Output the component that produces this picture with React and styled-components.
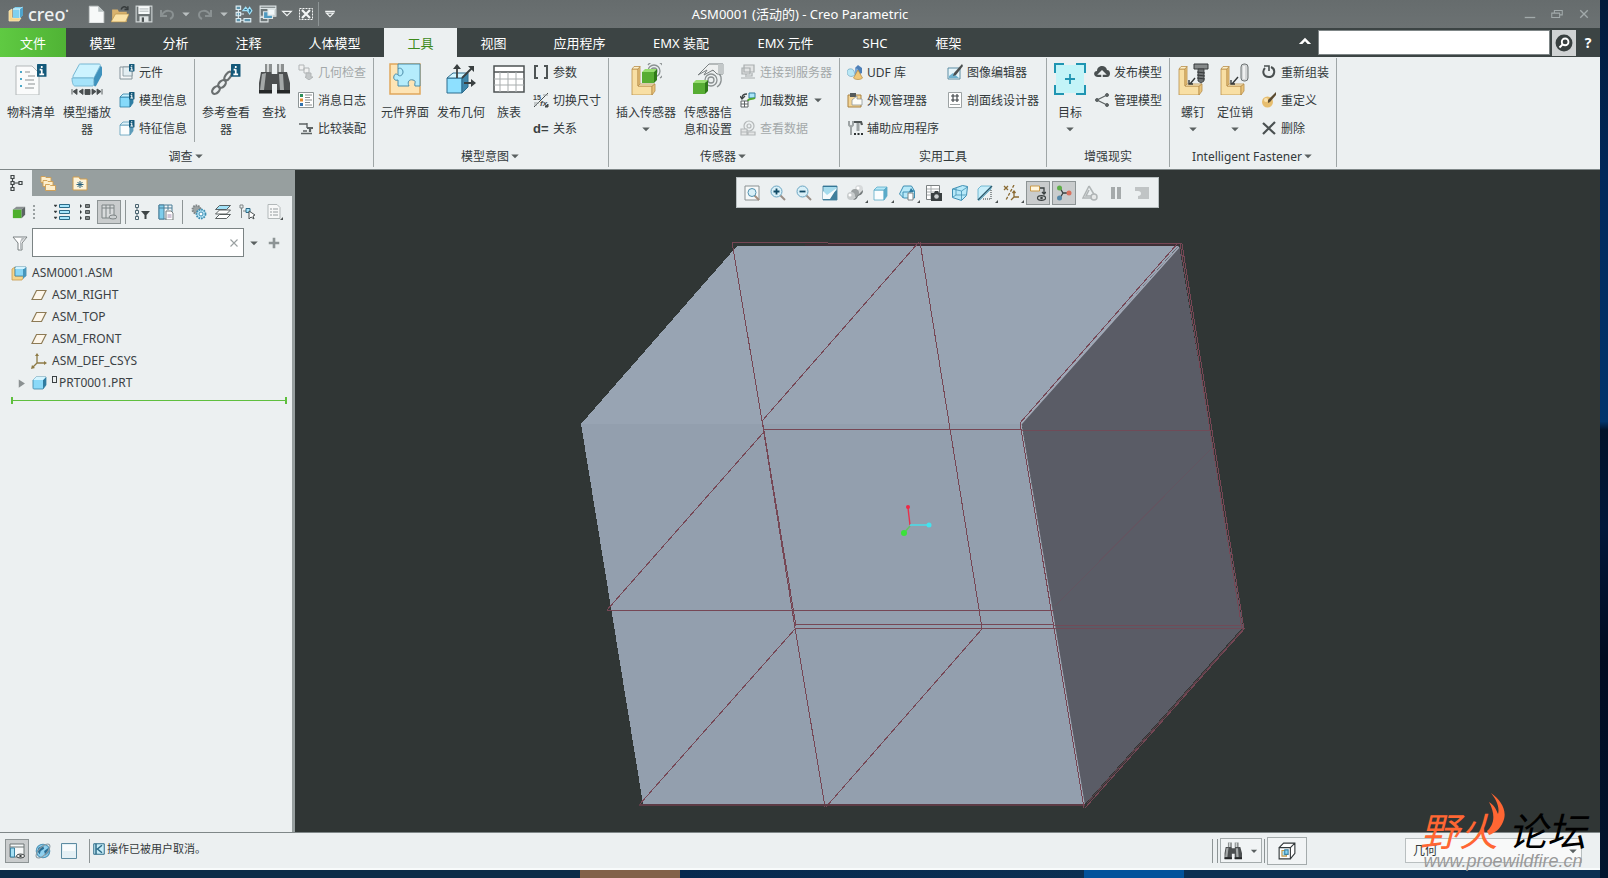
import React from "react";
import styled, { createGlobalStyle } from "styled-components";

const GlobalStyle = createGlobalStyle`
  * { box-sizing: border-box; }
  html, body, #root { height: 100%; }
  body {
    margin: 0;
    overflow: hidden;
    font-family: "Noto Sans", "Noto Sans CJK SC", sans-serif;
    font-size: 12px;
    color: #33393b;
    background: #01142e;
  }
  button, input, select { font: inherit; color: inherit; }
  button { border: 0; padding: 0; background: none; cursor: pointer; }
  svg { display: block; flex: none; }
`;

/* ---------- icons ---------- */

const infoBadge = (x, y, s) => (
  <g>
    <rect x={x} y={y} width={s} height={s * 1.35} rx="0.6" fill="#14597a" />
    <path
      d={`M${x + s * 0.5} ${y + s * 0.2}v${s * 0.22}M${x + s * 0.5} ${y + s * 0.55}v${s * 0.55}M${x + s * 0.28} ${y + s * 0.6}h${s * 0.2}M${x + s * 0.25} ${y + s * 1.1}h${s * 0.5}`}
      stroke="#fff"
      strokeWidth={s * 0.18}
    />
  </g>
);

const waves = (x, y) => (
  <g fill="none" stroke="#8b9192" strokeWidth="1.3">
    <circle cx={x} cy={y} r="3" />
    <circle cx={x} cy={y} r="6" />
    <path d={`M${x - 6} ${y - 6}a9 9 0 1 1 12 13`} />
  </g>
);

const bracketPart = (
  <g stroke="#b98f4c" strokeWidth="0.8">
    <path d="M2 6h6v17h14v9h-20z" fill="#f8dfa4" />
    <path d="M8 6l2-2.500v17.500l-2 2zM22 23l3-2v7l-3 4z" fill="#e9c47b" />
    <path d="M2 6l2-2.500h6l-2 2.500zM8 23l2-2h15l-3 2z" fill="#fdf0cb" />
  </g>
);

const magnifier = (
  <g>
    <path d="M10 10l5 5" stroke="#9b8f87" strokeWidth="2" />
    <circle cx="6.500" cy="6.500" r="5.500" fill="#d9f0f8" stroke="#6aa5c2" />
  </g>
);

const smallCube = (fill, stroke, top) => (
  <g stroke={stroke} strokeWidth="0.8">
    <path d="M1 5h10v10h-10z" fill={fill} />
    <path d="M1 5l3-3h10l-3 3z" fill={top} />
    <path d="M11 5l3-3v9l-3 4z" fill={stroke} />
  </g>
);

const bino = (
  <g>
    <path d="M7 1h7v9h-7zM19 1h7v9h-7z" fill="#8c9090" />
    <path d="M9 1h2v9h-2zM21 1h2v9h-2z" fill="#d5d8d8" />
    <path d="M3 9h10l1 2h5l1-2h9l3 11v10h-13v-9h-5v9h-13v-10z" fill="#4c4f50" />
    <path d="M4 11l4-1-2 17h-4zM21 11h4l1 16h-4z" fill="#a4a8a8" />
    <path d="M1 27h13v3.500h-13zM19 27h13v3.500h-13z" fill="#252728" />
  </g>
);

const icons = {
  logo: (
    <g>
      <path d="M1 5l3-2v9h9l-2 3h-10z" fill="#f5d58c" stroke="#fae8b8" strokeWidth="0.8" />
      <path d="M5 3l2-2h8v8l-3 3h-7z" fill="#7fd0ee" />
      <path d="M5 3h7v9M12 3l3-2" fill="none" stroke="#e5f8ff" />
      <path d="M12 3l3-2v8l-3 3z" fill="#4fa5cd" />
    </g>
  ),
  newFile: (
    <g>
      <path d="M2 1h8l5 5v10h-13z" fill="#f7f9f9" stroke="#c4caca" strokeWidth="0.7" />
      <path d="M10 1l5 5h-5z" fill="#b9c1c2" />
    </g>
  ),
  open: (
    <g>
      <path d="M1 4h5l1 2h7v9h-13z" fill="#d9b26d" />
      <path d="M0 15l4-7h12l-3 7z" fill="#fbe3a8" stroke="#bb9347" strokeWidth="0.6" />
      <path d="M9 4c1-3 4-3 5-1M15 1v3h-3" fill="none" stroke="#353a3b" strokeWidth="1.300" />
    </g>
  ),
  save: (
    <g>
      <path d="M1 1h14v14h-14z" fill="#6d7475" stroke="#cfd5d5" strokeWidth="1" />
      <path d="M3 1h10v7h-10z" fill="#f7fafa" />
      <path d="M4 3.500h8M4 5.500h8" stroke="#a8b0b1" strokeWidth="0.8" />
      <path d="M4 10h8v5h-8z" fill="#dfe4e4" />
      <path d="M6 11h2v4h-2z" fill="#4b5152" />
    </g>
  ),
  undo: <path d="M2 4v6h6M3 9c3-6 11-5 11 0c0 2-1 3-3 4" fill="none" stroke="#8a9192" strokeWidth="2" />,
  redo: <path d="M14 4v6h-6M13 9c-3-6-11-5-11 0c0 2 1 3 3 4" fill="none" stroke="#8a9192" strokeWidth="2" />,
  regen: (
    <g fill="none" stroke="#dcebf1">
      <path d="M1 1h4v3h-4zM1 6.500h4v3h-4zM1 12h4v3h-4zM8 12h6v3h-6z" fill="#5c93ab" />
      <path d="M3 4v8M5 8h3M5 13.500h3" />
      <path d="M7 5l2.500-3 2.500 3zM11 5l2-3 2 3-2 3z" fill="#2d6f8d" stroke="#9ee0f8" />
    </g>
  ),
  windows: (
    <g stroke="#dde4e5" fill="#6e7778">
      <path d="M1 1h14v9h-14zM1 3h14" />
      <path d="M1 11h7v4h-7z" />
      <path d="M4 6h8v6h-8z" fill="#4f9ac0" />
      <path d="M8 4h6v5h-6z" fill="#f1f7f9" />
    </g>
  ),
  closeBox: (
    <g fill="none" stroke="#f4f6f6">
      <path d="M1.500 2.500h13v11h-13z" strokeDasharray="2 1" />
      <path d="M4 4l8 8M12 4l-8 8" strokeWidth="2.200" />
    </g>
  ),
  caretOpen: <path d="M3 5h10l-5 5z" fill="none" stroke="#f0f3f3" strokeWidth="1.300" />,
  caretBar: <path d="M2.500 5h11M4 7h8l-4 4z" fill="none" stroke="#f0f3f3" strokeWidth="1.400" />,
  caret: <path d="M3 6h10l-5 5z" fill="currentColor" />,
  minimize: <path d="M2 12h12" stroke="#a2aaab" strokeWidth="1.500" />,
  restore: <path d="M2 7h9v5h-9zM5 7v-3h9v5h-3" fill="none" stroke="#a2aaab" strokeWidth="1.200" />,
  close: <path d="M3 3l10 10M13 3l-10 10" stroke="#a2aaab" strokeWidth="1.800" />,
  collapse: <path d="M1 9l7-7 7 7h-4l-3-3-3 3z" fill="#fff" />,
  searchDisc: (
    <g>
      <circle cx="8" cy="8" r="7.500" fill="#394040" />
      <circle cx="9" cy="7" r="3" fill="none" stroke="#fff" strokeWidth="1.600" />
      <path d="M7 9l-3 3" stroke="#fff" strokeWidth="1.800" />
    </g>
  ),

  bom: (
    <g>
      <path d="M1 3h16l7 7v22h-23z" fill="#fafbfb" stroke="#b3b8b9" />
      <path d="M5 8h2v2h-2zM5 15h2v2h-2zM5 22h2v2h-2z" fill="#4ba7c8" />
      <path d="M10 9h5M13 13h7M10 17h9M13 21h7M10 25h9" stroke="#8b9192" />
      {infoBadge(22, 1, 9.500)}
    </g>
  ),
  player: (
    <g>
      <path d="M8 2c0-1 1-1 2-1h18c1 0 2 1 1 2l-6 12h-20c-1 0-1-1-1-2z" fill="#cdf3ff" stroke="#76b7d3" />
      <path d="M23 15l6.500-12c1 0 1.500 1 1.500 2v7l-6 11c-1 1-2 0-2-1z" fill="#3f92bd" />
      <path d="M1 15h21c1 0 1 8 0 8h-18c-2 0-3-4-3-8z" fill="#a5e3fa" stroke="#76b7d3" />
      <path d="M1 26v5.500M6 26v5.500l-4-3zM12 26v5.500l-4-3zM14 26.500h5v5h-5zM21 26v5.500l4-3zM26 26v5.500l4-3zM31 26v5.500" fill="#4a4f50" stroke="#4a4f50" strokeWidth="0.900" />
    </g>
  ),
  compInfo: (
    <g>
      <path d="M1 3h12v12h-12z" fill="#f4f7f8" stroke="#84939a" />
      <path d="M4 3h9v9h-9z" fill="#e3eef2" stroke="#84939a" strokeWidth="0.8" />
      {infoBadge(10, 0, 5.500)}
    </g>
  ),
  modelInfo: (
    <g>
      {smallCube("#86dafa", "#2f7ea3", "#c7f1ff")}
      {infoBadge(10, 0, 5.500)}
    </g>
  ),
  featInfo: (
    <g>
      {smallCube("#fbfdfd", "#5c9cba", "#e0f2f8")}
      {infoBadge(10, 0, 5.500)}
    </g>
  ),
  refViewer: (
    <g>
      <g fill="none" stroke="#6a6f70" strokeWidth="2.200">
        <ellipse cx="6" cy="27" rx="4.500" ry="3" transform="rotate(-45 6 27)" />
        <ellipse cx="12" cy="21" rx="4.500" ry="3" transform="rotate(-45 12 21)" />
        <ellipse cx="18" cy="13" rx="5" ry="2.500" transform="rotate(-55 18 13)" />
      </g>
      {infoBadge(21, 1, 9.500)}
    </g>
  ),
  binoculars: bino,
  geomCheck: (
    <g fill="#f0f1f1" stroke="#b1b5b6">
      <path d="M1 1h5v5h-5zM6 4h5v5h-5z" />
      <path d="M8 9h5v4h2l-4 3-4-3h1z" fill="#c3c7c8" />
    </g>
  ),
  msgLog: (
    <g>
      <path d="M0.500 0.500h15v15h-15z" fill="#fff" stroke="#8d9596" />
      <path d="M2 2h3v3h-3z" fill="#2b8f5a" />
      <path d="M2 6.500h3v3h-3z" fill="#e28a2d" />
      <path d="M2 11h3v3h-3z" fill="#3171ad" />
      <path d="M7 3h7M7 5.500h5M7 8h7M7 10.500h5M7 13h7" stroke="#868c8d" />
    </g>
  ),
  compareAsm: (
    <g fill="none" stroke="#5d6364">
      <path d="M1 4h8M9 3v5M3 13.500h11M5 11h4" strokeWidth="1.400" />
      <path d="M9 8h6M12 8v4" strokeWidth="2.200" />
    </g>
  ),
  compInterface: (
    <g>
      <path d="M1 1h30v30h-30z" fill="#fde4b5" stroke="#e0a75c" strokeWidth="1.500" />
      <path d="M9 1h22v22h-5c-1-3 2-5-2-6s-6 2-4 6h-11v-6c-3 1-5-1-4-4s3-2 4-1z" fill="#b5ecfc" stroke="#4c8ca9" />
      <path d="M9 6c2-2 5 0 5 3s-3 5-5 3" fill="none" stroke="#4c8ca9" />
    </g>
  ),
  pubGeom: (
    <g>
      <path d="M2 15h15v15h-15z" fill="#8ee0ff" stroke="#2c6d8e" />
      <path d="M2 15l6-5h15l-6 5z" fill="#d1f5ff" stroke="#2c6d8e" />
      <path d="M17 15l6-5v14l-6 6z" fill="#3f86aa" stroke="#2c6d8e" />
      <path d="M12 15v-12M17 15l11-11M19 20h11" stroke="#3a4041" strokeWidth="1.800" />
      <path d="M8 6l4-5 4 5zM23 3h6v6zM26 16l5 4-5 4z" fill="#3a4041" />
    </g>
  ),
  familyTable: (
    <g fill="none">
      <path d="M1 3h30v26h-30z" fill="#fff" stroke="#4c5253" strokeWidth="1.500" />
      <path d="M1 9h30" stroke="#4c5253" strokeWidth="1.500" />
      <path d="M1 16h30M1 22h30M7 9v20M15 9v20M23 9v20" stroke="#a9aeaf" />
    </g>
  ),
  params: <path d="M5 2h-3v12h3M11 2h3v12h-3" fill="none" stroke="#4e5455" strokeWidth="2" />,
  switchDim: (
    <g>
      <path d="M1 15l14-14M15 12v3h-3z" stroke="#454b4c" fill="#454b4c" />
      <text x="0" y="8" fontSize="7" fontWeight="700" fill="#454b4c" fontFamily="Liberation Sans">15</text>
      <text x="7" y="14" fontSize="8" fontStyle="italic" fontWeight="700" fill="#454b4c" fontFamily="Liberation Sans">fx</text>
      <path d="M1 11h5M1 13h3M10 3h5" stroke="#9aa0a1" />
    </g>
  ),
  relations: (
    <text x="0" y="13" fontSize="13" fontWeight="700" fill="#3a4041" fontFamily="Liberation Sans">d=</text>
  ),
  insertSensor: (
    <g>
      {waves(24, 8)}
      {bracketPart}
      <path d="M12 9h12v11h-12z" fill="#57ad33" />
      <path d="M12 9l3-3h12l-3 3z" fill="#97dd70" />
      <path d="M24 9l3-3v11l-3 3z" fill="#2f7a18" />
    </g>
  ),
  sensorInfo: (
    <g>
      {waves(19, 17)}
      <path d="M6 12l11-11h14v10h-6l-4-4-9 5 3-5z" fill="#eef0f0" stroke="#7b8182" />
      <path d="M26 1h6v10h-6z" fill="#c3c8c9" />
      <path d="M1 20h12v11h-12z" fill="#57ad33" />
      <path d="M1 20l3-3h12l-3 3z" fill="#97dd70" />
      <path d="M13 20l3-3v11l-3 3z" fill="#2f7a18" />
    </g>
  ),
  server: (
    <g fill="#e2e4e4" stroke="#a9aeaf" strokeWidth="1.200">
      <path d="M4 1h10v7h-10zM2 4h8v6h-8z" />
      <path d="M6 10v3M1 14h14M12 9v3h-5" fill="none" />
    </g>
  ),
  loadData: (
    <g fill="none">
      <path d="M9 1h6v5h-6z" fill="#a8e5f8" stroke="#2f7a9b" />
      <path d="M8 9c0-3 4-1 7-3" stroke="#52a930" strokeWidth="2" />
      <path d="M2 6c0-3 2-4 5-4M0 4l2 3 3-3" stroke="#3d4344" strokeWidth="1.300" />
      <path d="M1 9h7v6h-7zM1 12h7M4.500 9v6" stroke="#5d6364" fill="#fff" />
    </g>
  ),
  viewData: (
    <g fill="none" stroke="#b4b8b9" strokeWidth="1.200">
      <circle cx="9" cy="6" r="2" />
      <circle cx="9" cy="6" r="5" />
      <path d="M1 9h6v6h-6zM8 12h7v3h-7zM1 12h6" fill="#e4e6e6" />
    </g>
  ),
  udf: (
    <g>
      <path d="M8 4l3-3 4 3v5l-4 2z" fill="#4d7fb8" />
      <path d="M8 4l3 1v6h-3z" fill="#7ba6d3" />
      <path d="M0 8c0-4 6-4 7-1l1 4c-4 3-8 1-8-3z" fill="#b9e7f5" stroke="#6da4bf" strokeWidth="0.700" />
      <path d="M11 6l4.500 8c-2 2-7 2-9 0z" fill="#efc778" stroke="#b48b40" strokeWidth="0.700" />
    </g>
  ),
  appearance: (
    <g>
      <path d="M1 3h13v12h-13z" fill="#f3d596" stroke="#a98243" />
      <path d="M3 1h6v4h-6z" fill="#555b5c" />
      <path d="M5 8l5-4v3h5v6h-10z" fill="#fdfdf8" stroke="#90979a" strokeWidth="0.800" />
    </g>
  ),
  auxApps: (
    <g fill="none">
      <path d="M2 1v4l2 2 2-2v-4M4 6v9" stroke="#9ea4a5" strokeWidth="2" />
      <path d="M7 2h7l1 3" stroke="#4f5556" strokeWidth="2.200" />
      <path d="M11 3v8" stroke="#9ea4a5" strokeWidth="3" />
      <path d="M7 14h2M10.500 14h2M14 14h2" stroke="#2d3233" strokeWidth="1.800" />
    </g>
  ),
  imageEditor: (
    <g>
      <path d="M1 4h12v11h-12z" fill="#e6f5fa" stroke="#5d8da3" />
      <path d="M2 12l4-3 6 5h-10z" fill="#6fb2cf" />
      <path d="M15 0l-8 9-1 3 3-1 7-9z" fill="#4a4f50" />
    </g>
  ),
  xsection: (
    <g fill="none">
      <path d="M1.500 0.500h13v15h-13z" fill="#fff" stroke="#9da3a4" />
      <path d="M4 4h8M4 8h8M6 2v8M10 2v8" stroke="#41474a" strokeWidth="1.200" />
      <path d="M3 12.500h10" stroke="#9da3a4" />
    </g>
  ),
  target: (
    <g fill="none" stroke="#2095b2">
      <path d="M2 2h28v28h-28z" fill="#c3f4f8" stroke="none" />
      <path d="M1 10v-9h9M22 1h9v9M31 22v9h-9M10 31h-9v-9" strokeWidth="2" />
      <path d="M16 11v10M11 16h10" strokeWidth="1.800" />
    </g>
  ),
  cloudUp: (
    <g>
      <path d="M4 13c-5 0-5-6-1-6c0-6 9-7 10-1c4 0 4 7 0 7z" fill="#4a5051" />
      <path d="M8 15v-5M5 10l3-3 3 3z" fill="#ecf0f1" stroke="#ecf0f1" strokeWidth="1.500" />
    </g>
  ),
  share: (
    <g fill="#5b6162" stroke="#5b6162">
      <path d="M13 3l-10 5 10 5" fill="none" strokeWidth="1.200" />
      <circle cx="13" cy="3" r="1.500" />
      <circle cx="3" cy="8" r="1.500" />
      <circle cx="13" cy="13" r="1.500" />
    </g>
  ),
  screw: (
    <g>
      {bracketPart}
      <path d="M17 1h14v5h-14z" fill="#85898a" stroke="#35393a" />
      <path d="M21 6h6v12l-3 2-3-2z" fill="#6d7172" stroke="#35393a" strokeWidth="0.800" />
      <path d="M20 9l8 1M20 12l8 1M20 15l8 1" stroke="#35393a" />
      <path d="M18 15l-5 6M12 17v4h4" fill="none" stroke="#35393a" strokeWidth="1.400" />
    </g>
  ),
  pin: (
    <g>
      {bracketPart}
      <rect x="22" y="1" width="7" height="17" rx="3" fill="#d3d6d7" stroke="#6d7273" />
      <path d="M25 3v13" stroke="#f8f9f9" strokeWidth="1.500" />
      <path d="M19 14l-6 7M12 17v4h4" fill="none" stroke="#35393a" strokeWidth="1.400" />
    </g>
  ),
  reassemble: (
    <g fill="none" stroke="#4a5051" strokeWidth="2">
      <path d="M10 3c5 2 4 10-2 10s-7-6-4-9" />
      <path d="M3 2h5v5" strokeWidth="1.600" />
    </g>
  ),
  redefine: (
    <g>
      <circle cx="6.500" cy="10" r="5.500" fill="#e6bd6e" />
      <circle cx="5" cy="8" r="2" fill="#fae2ae" />
      <path d="M15 0l-8 8 0 3 2-1 6-7z" fill="#5a4a30" />
    </g>
  ),
  remove: <path d="M2 3l12 11M14 2l-12 12" stroke="#4a5051" strokeWidth="2.200" />,

  treeTab: (
    <path d="M3 0.500h3v3h-3zM3 6.500h3v3h-3zM3 12.500h3v3h-3zM11 6.500h3v3h-3zM4.500 4v2M4.500 10v2M6 8h5" fill="none" stroke="#3e4445" strokeWidth="1.200" />
  ),
  folders: (
    <g fill="#fdeecb" stroke="#cf9d4f" strokeWidth="0.900">
      <path d="M1 1.500h4l1 1h5v5h-10z" />
      <path d="M3 5.500h4l1 1h5v5h-10z" />
      <path d="M5.500 9.500h4l1 1h5v5h-10z" />
    </g>
  ),
  favorites: (
    <g>
      <path d="M1 2h6l1 2h7v11h-14z" fill="#fdf3d8" stroke="#cf9d4f" />
      <path d="M8 6v7M4.500 9.500h7M5.500 7l5 5M10.500 7l-5 5" stroke="#27607d" />
    </g>
  ),
  greenCube: (
    <g>
      <path d="M1 5h10v10h-10z" fill="#4eb02d" />
      <path d="M1 5l4-3h10l-4 3z" fill="#8a9192" />
      <path d="M11 5l4-3v9l-4 4z" fill="#5d6465" />
    </g>
  ),
  handle: <path d="M8 1v14" stroke="#9aa1a2" strokeWidth="2" strokeDasharray="2 2" />,
  expandList: (
    <g stroke="#2b6a87" fill="#a5e5fb">
      <path d="M5.500 0.500h10v3h-10zM5.500 6.500h10v3h-10zM5.500 12.500h10v3h-10z" />
      <path d="M0 1h3l-1.500 2zM0 7h3l-1.500 2zM0 13h3l-1.500 2z" fill="#33393b" stroke="#33393b" strokeWidth="0.500" />
    </g>
  ),
  collapseList: (
    <g stroke="#4c5253" fill="#808687">
      <path d="M8.500 0.500h4v3h-4zM8.500 6.500h4v3h-4zM8.500 12.500h4v3h-4z" />
      <path d="M3 0l2 2-2 2zM3 6l2 2-2 2zM3 12l2 2-2 2z" fill="#33393b" stroke="none" />
    </g>
  ),
  columns: (
    <g fill="none" stroke="#7d8485">
      <path d="M1 1h12v13h-12z" fill="#d8dbdc" />
      <path d="M1 4h12M5 1v13M9 1v9" />
      <ellipse cx="12" cy="13" rx="4" ry="2" fill="#ccd0d1" />
    </g>
  ),
  treeFilter: (
    <g>
      <path d="M1.500 0.500h3v3h-3zM1.500 6.500h3v3h-3zM1.500 12.500h3v3h-3zM3 4v2M3 10v2" fill="none" stroke="#4a6470" />
      <path d="M7 7h9l-3.500 4v4h-2v-4z" fill="#3f4546" />
    </g>
  ),
  treeColumns: (
    <g>
      <path d="M1 1h13v14h-13z" fill="#f3f6f7" stroke="#4a7f98" />
      <path d="M1 1h5v14h-5z" fill="#7ecdec" stroke="#4a7f98" />
      <path d="M1 4h13M10 1v5" stroke="#4a7f98" />
      <path d="M8 7h5l2 2v7h-7z" fill="#fff" stroke="#797f80" />
      <path d="M9.500 11h4M9.500 13h4" stroke="#a58ab0" />
    </g>
  ),
  gears: (
    <g>
      <circle cx="5.500" cy="5.500" r="4" fill="#9ba2a3" stroke="#7f8687" strokeWidth="2" strokeDasharray="1.500 1" />
      <circle cx="10" cy="10" r="4.500" fill="#b9e6f7" stroke="#3f8fb3" strokeWidth="1.800" strokeDasharray="1.700 0.900" />
      <circle cx="10" cy="10" r="2" fill="#fff" stroke="#3f8fb3" />
    </g>
  ),
  layers: (
    <g stroke="#4c5253" strokeWidth="0.900">
      <path d="M0.500 14.500l4-4h11l-4 4z" fill="#fff" />
      <path d="M0.500 10l4-4h11l-4 4z" fill="#fff" />
      <path d="M0.500 5.500l4-4h11l-4 4z" fill="#a2e2f8" />
    </g>
  ),
  treeArrow: (
    <g fill="none" stroke="#7c8384">
      <path d="M1 1h3v3h-3zM2.500 4v10" />
      <path d="M4 7h3" />
      <path d="M7 4.500h4v4h-4z" fill="#a2e2f8" stroke="#2b6a87" />
      <path d="M10 7v8l2-2 3 2-1-3 2-1z" fill="#fff" stroke="#4c5253" />
    </g>
  ),
  listDoc: (
    <g>
      <path d="M1 0.500h9l3 3v11h-12z" fill="#f7f8f8" stroke="#b2b8b9" />
      <path d="M3 5h2M3 8h2M3 11h2M6 5h5M6 8h5M6 11h5" stroke="#969c9d" strokeWidth="1.200" />
      <path d="M16 13v3h-3z" fill="#4c5253" />
    </g>
  ),
  funnel: (
    <g>
      <path d="M1 2h14l-5 6v7h-4v-7z" fill="#fff" stroke="#7b8182" />
      <path d="M9 7l5-5h-4l-2 5v7h2z" fill="#b9bec0" />
    </g>
  ),
  clear: <path d="M4 4l8 8M12 4l-8 8" stroke="#9aa0a1" strokeWidth="1.300" />,
  plus: <path d="M8 2v12M2 8h12" stroke="#8d9495" strokeWidth="3" />,
  assembly: (
    <g>
      <path d="M1 4l3-2v9h9l-2 4h-10z" fill="#f5d58c" stroke="#c99a4b" strokeWidth="0.800" />
      <path d="M4 2h11v9h-11z" fill="#8bd7f5" stroke="#3a83a4" strokeWidth="0.800" />
      <path d="M12 4l3-2v9l-3 3z" fill="#4796bb" />
      <path d="M4 4l1-2h10l-2 2z" fill="#d3f4ff" />
    </g>
  ),
  datumPlane: <path d="M1 12.500l4.500-9h9.500l-4.500 9z" fill="#fdf6ea" stroke="#8d7a55" strokeWidth="1.200" />,
  csys: (
    <g stroke="#8d7a45" strokeWidth="1.300" fill="#8d7a45">
      <path d="M6 2v8h8M6 10l-4 4" fill="none" />
      <path d="M6 0l2 3h-4zM16 10l-3 2v-4zM0 16l1-4 3 3z" stroke="none" />
    </g>
  ),
  part: (
    <g>
      <path d="M2 5l3-3h10v8l-3 4h-9c-1 0-1-1-1-2z" fill="#8bd9f8" stroke="#3a83a4" strokeWidth="0.800" />
      <path d="M12 5l3-3v8l-3 4z" fill="#2f7ba0" />
      <path d="M2 5l3-3h10l-3 3z" fill="#d3f4ff" />
    </g>
  ),
  expander: <path d="M4 2l9 6-9 6z" fill="#8b9192" />,

  refit: (
    <g>
      <path d="M1 1h14v14h-14z" fill="#f7f9f9" stroke="#8a9192" />
      <path d="M10 10l5 5" stroke="#a58f80" strokeWidth="2" />
      <circle cx="8" cy="7.500" r="4" fill="#d9f0f8" stroke="#5291ae" />
    </g>
  ),
  zoomIn: (
    <g>
      {magnifier}
      <path d="M3.500 6.500h6M6.500 3.500v6" stroke="#104a66" strokeWidth="1.800" />
    </g>
  ),
  zoomOut: (
    <g>
      {magnifier}
      <path d="M3.500 6.500h6" stroke="#104a66" strokeWidth="1.800" />
    </g>
  ),
  repaint: (
    <g>
      <path d="M1 1h14v14h-14z" fill="#a7dced" stroke="#5b8da5" />
      <path d="M1 15v-5l4 2 10-7v10z" fill="#407f9c" />
      <path d="M1 6l4 4 10-7-7 11h-7z" fill="#f6fbfc" />
      <path d="M1 1.500h14" stroke="#347797" />
    </g>
  ),
  shading: (
    <g>
      <circle cx="12" cy="4" r="4" fill="#d7dadb" />
      <circle cx="8" cy="8" r="4" fill="#9ba0a1" />
      <circle cx="4" cy="11" r="4" fill="#c8cccd" />
      <circle cx="11" cy="3" r="1.500" fill="#fff" />
      <circle cx="3" cy="10" r="1.500" fill="#fff" />
      <path d="M6 15l3-3 3-3 4-4c0 5-3 5-5 6c-1 3-3 4-5 4z" fill="#747a7b" />
    </g>
  ),
  displayStyle: smallCube("#fafdfe", "#5babc9", "#b4e8f7"),
  savedViews: (
    <g>
      <path d="M0.500 9l4-8h8l3 5v7h-11z" fill="#b7e9f9" stroke="#3f8fb3" />
      <path d="M4 7h8M12 7l3-2M4 7v6" stroke="#3f8fb3" />
      <path d="M9 8h5v7h-5z" fill="#fff" stroke="#7b8182" />
      <path d="M12 3l3 4h-5z" fill="#2f7ba0" />
    </g>
  ),
  viewManager: (
    <g>
      <path d="M0.500 0.500h13v14h-13z" fill="#fff" stroke="#7b8182" />
      <path d="M1 4h12M1 7h12M1 10h12M5 1v13" stroke="#a5abac" />
      <path d="M5 8h3l1-2h3l1 2h3v8h-11z" fill="#3a4041" />
      <circle cx="10.500" cy="11.500" r="2.300" fill="#c9cdce" />
    </g>
  ),
  perspective: (
    <g stroke="#3f8fb3" fill="#b7e9f9">
      <path d="M0.500 4l10-3.500 5 1-1 9-5 5-9-3z" />
      <path d="M0.500 4l9 2 6-4M9.500 6v9M4 3v7l-3 2M4 10l10 0" fill="none" strokeWidth="0.800" />
    </g>
  ),
  section: (
    <g>
      <path d="M1 4l3-3h10v3l-11 11h-2z" fill="#c8eefa" stroke="#5babc9" strokeWidth="0.800" />
      <path d="M1 15l14-14" stroke="#29596d" strokeWidth="1.400" />
      <path d="M6 14h8v-9" fill="none" stroke="#8d9495" strokeDasharray="1 1" strokeWidth="2" />
    </g>
  ),
  datumDisplay: (
    <g fill="none" stroke="#8a6a32" strokeWidth="1.300">
      <path d="M1 1l4 4M5 1l-4 4" />
      <path d="M11 0l-8 15" strokeDasharray="3 1.500" />
      <path d="M11 6v6h5M11 12l-3 3M9.500 8l1.500-2 1.500 2" />
    </g>
  ),
  annotation: (
    <g fill="none">
      <path d="M0.500 1h9v5h-9z" fill="#fff6dd" stroke="#c99a4b" />
      <path d="M10 3h4v6M12 7l2 2 2-2" stroke="#3a4041" strokeWidth="1.300" />
      <ellipse cx="11.500" cy="13" rx="4" ry="2.300" stroke="#3a4041" strokeWidth="1.200" />
      <circle cx="11.500" cy="13" r="1.300" fill="#3a4041" />
    </g>
  ),
  spinCenter: (
    <g>
      <path d="M4 3l3 5h6M7 8l-3 5" fill="none" stroke="#3a4041" strokeWidth="1.300" />
      <circle cx="3.500" cy="3" r="2.500" fill="#5fae48" />
      <circle cx="13" cy="8" r="2.500" fill="#d9715e" />
      <circle cx="3.500" cy="13" r="2.500" fill="#5487a8" />
    </g>
  ),
  simulate: (
    <g fill="none" stroke="#b0b5b6" strokeWidth="1.500">
      <path d="M7 1l-6 12h10M7 1l6 10M7 5l-3 6h5" />
      <circle cx="12" cy="12" r="3" fill="#e6e8e8" />
    </g>
  ),
  pause: <path d="M3 2h4v12h-4zM9 2h4v12h-4z" fill="#a5aaab" />,
  exitSim: <path d="M1 2h14v12h-11v-3c4 0 4-5 0-5h-3z" fill="#c0c4c5" />,

  navToggle: (
    <g>
      <path d="M1 1h14v13h-14z" fill="#f6f8f8" stroke="#6d7475" />
      <path d="M1 4h14" stroke="#6d7475" />
      <path d="M1.500 5h4v9h-4z" fill="#a5dff3" stroke="#3a83a4" />
      <ellipse cx="11.500" cy="13" rx="4" ry="2" fill="#eee" stroke="#3a4041" />
      <circle cx="11.500" cy="13" r="1.200" fill="#3a4041" />
    </g>
  ),
  globe: (
    <g>
      <circle cx="8" cy="8" r="6" fill="#8fd0ee" stroke="#4d94b8" />
      <path d="M4 5l4-2 1 3-3 2-1 3-2-3zM9 8l4-3v4l-3 3z" fill="#286f97" />
      <ellipse cx="8" cy="8" rx="8" ry="3.500" transform="rotate(-45 8 8)" fill="none" stroke="#8b9ba3" />
    </g>
  ),
  blankSquare: (
    <g>
      <path d="M0.500 0.500h15v15h-15z" fill="#e4f0f5" stroke="#5c8ba1" />
      <path d="M2 2h12v6h-12z" fill="#f8fbfc" />
    </g>
  ),
  message: (
    <g>
      <path d="M1 1h14v14h-14z" fill="#c8edf8" stroke="#2b6a87" strokeWidth="1.300" />
      <path d="M4 1v14M12 3l-6 5 6 5" fill="none" stroke="#2b6a87" strokeWidth="2" />
    </g>
  ),
  modelBox: (
    <g fill="none" stroke="#33393b">
      <path d="M1 5h10v10h-10zM1 5l4-4h10v9l-4 5M11 5l4-4" fill="#fff" />
      <path d="M3.500 7.500h4v5h-4z" fill="#a5dff3" stroke="#c99a4b" />
      <path d="M6 7h3v4h-3z" fill="#8bd7f5" stroke="#3a83a4" />
    </g>
  ),
};

const BIG = [
  "bom", "player", "refViewer", "binoculars", "compInterface", "pubGeom", "familyTable",
  "insertSensor", "sensorInfo", "target", "screw", "pin",
];

const Icon = ({ name, size = 16 }) => {
  const box = BIG.includes(name) ? 32 : 16;
  return (
    <svg width={size} height={size} viewBox={`0 0 ${box} ${box}`} aria-hidden="true">
      {icons[name]}
    </svg>
  );
};

/* ---------- shell ---------- */

const Desktop = styled.div`
  height: 100vh;
  display: grid;
  grid-template-columns: minmax(0, 1fr) 8px;
  background: linear-gradient(#021a3a, #01285a 20%, #01346c 48%, #011229 49%, #01183a 60%, #010b20 75%, #02152f);
`;

const Shell = styled.div`
  grid-column: 1;
  position: relative;
  display: flex;
  flex-direction: column;
  min-height: 0;
`;

const TitleBar = styled.header`
  height: 28px;
  display: grid;
  grid-template-columns: 1fr auto 1fr;
  align-items: center;
  background: linear-gradient(#666c6d, #6c7273);
  color: #fff;
`;

const QuickAccess = styled.div`
  display: flex;
  align-items: center;
  height: 28px;
`;

const Brand = styled.div`
  display: flex;
  align-items: center;
  gap: 4px;
  width: 84px;
  padding-left: 8px;
  font-size: 18px;
  line-height: 20px;
  font-weight: 500;
  color: #eef1f1;
`;

const BrandDot = styled.sup`
  font-size: 8px;
  line-height: 8px;
`;

const ToolButton = styled.button`
  display: flex;
  align-items: center;
  justify-content: center;
  flex: none;
  width: ${(p) => p.$w || 24}px;
  height: 24px;
  color: ${(p) => p.$color || "#5a6061"};
  ${(p) => p.$pressed && "background: #c9cccd; box-shadow: inset 0 0 0 1px #8d9495;"}
`;

const Rule = styled.span`
  flex: none;
  width: 1px;
  height: 24px;
  margin: 0 ${(p) => p.$gap || 0}px;
  background: #8d9495;
`;

const Spacer = styled.span`
  flex: none;
  width: ${(p) => p.$w}px;
`;

const WindowTitle = styled.h1`
  margin: 0;
  font-size: 13px;
  line-height: 20px;
  font-weight: 400;
`;

const WindowButtons = styled.div`
  display: flex;
  justify-content: flex-end;
  gap: 3px;
  padding-right: 4px;
`;

/* ---------- menu tabs ---------- */

const TabBar = styled.nav`
  height: 29px;
  display: flex;
  background: #3c4444;
  color: #fff;
`;

const Tab = styled.button`
  width: ${(p) => p.$w || 73}px;
  flex: none;
  font-size: 13px;
  line-height: 20px;
  white-space: nowrap;
  color: ${(p) => (p.$active ? "#3d8a1c" : "#fff")};
  background: ${(p) => (p.$active ? "#ecf0f1" : p.$file ? "linear-gradient(to right, #5fca42, #50b335)" : "none")};
`;

const TabTools = styled.div`
  margin-left: auto;
  display: flex;
  align-items: center;
`;

const CommandSearch = styled.input`
  width: 232px;
  height: 25px;
  margin: 0 2px 0 1px;
  border: 1px solid #7f8687;
  background: #fff;
`;

const SearchButton = styled(ToolButton)`
  height: 26px;
  background: #cfd2d3;
`;

const HelpButton = styled(ToolButton)`
  color: #fff;
  font-size: 14px;
  font-weight: 700;
`;

/* ---------- ribbon ---------- */

const RibbonBar = styled.section`
  height: 113px;
  flex: none;
  display: flex;
  background: #ecf0f1;
  border-bottom: 1px solid #7f8788;
`;

const Group = styled.div`
  flex: none;
  width: ${(p) => p.$w}px;
  margin: 1px 0 2px;
  display: flex;
  flex-direction: column;
  border-right: 1px solid #9fa6a7;
`;

const GroupBody = styled.div`
  flex: 1;
  display: flex;
  padding-left: 3px;
`;

const GroupLabel = styled.div`
  display: flex;
  align-items: center;
  justify-content: center;
  height: 22px;
  font-size: 12px;
  color: #33393b;

  > svg { color: #5a6061; }
`;

const BigButton = styled.button`
  width: ${(p) => p.$w || 56}px;
  flex: none;
  display: flex;
  flex-direction: column;
  align-items: center;
  align-self: flex-start;
  padding: 5px 4px 0;
  font-size: 12px;
  line-height: 17px;
  color: #33393b;

  > span { margin-top: 9px; }
  > svg + span + svg { margin-top: 2px; color: #5a6061; }
`;

const SmallColumn = styled.div`
  flex: none;
  width: ${(p) => p.$w || 76}px;
  padding-left: 4px;
  display: flex;
  flex-direction: column;
`;

const SmallButton = styled.button`
  height: 28px;
  display: flex;
  align-items: center;
  gap: 4px;
  font-size: 12px;
  line-height: 17px;
  white-space: nowrap;
  color: ${(p) => (p.disabled ? "#a3a8a9" : "#33393b")};

  > span + svg { color: #5a6061; }
`;

const InnerRule = styled.span`
  flex: none;
  width: 1px;
  margin: 1px 3px 3px;
  background: #9fa6a7;
`;

/* ---------- workspace ---------- */

const Workspace = styled.main`
  flex: 1;
  min-height: 0;
  display: grid;
  grid-template-columns: 295px minmax(0, 1fr);
`;

const Navigator = styled.aside`
  display: flex;
  flex-direction: column;
  background: #ecf0f1;
  border-right: 3px solid #979f9f;
`;

const NavTabs = styled.div`
  height: 26px;
  display: flex;
  background: #979f9f;
`;

const NavTab = styled.button`
  width: 32px;
  display: flex;
  align-items: center;
  justify-content: center;
  background: ${(p) => (p.$active ? "#ecf0f1" : "none")};
`;

const NavToolbar = styled.div`
  display: flex;
  align-items: center;
  height: 31px;
  padding: 0 7px;
`;

const FilterRow = styled.div`
  display: flex;
  align-items: center;
  height: 31px;
  padding-left: 12px;
  gap: 4px;
`;

const FilterField = styled.div`
  flex: none;
  display: flex;
  align-items: center;
  width: 212px;
  height: 29px;
  border: 1px solid #7b8384;
  background: #fff;
`;

const FilterInput = styled.input`
  flex: 1;
  min-width: 0;
  border: 0;
  outline: 0;
  background: none;
`;

const Tree = styled.ul`
  list-style: none;
  margin: 4px 0 0;
  padding: 0;
`;

const TreeRow = styled.li`
  display: flex;
  align-items: center;
  height: 22px;
  padding-left: ${(p) => (p.$expand ? 11 : p.$child ? 31 : 11)}px;
`;

const TreeItem = styled.button`
  display: flex;
  align-items: center;
  gap: 5px;
  font-size: 12px;
  line-height: 18px;
  color: #3b4144;
`;

const PlacementMark = styled.i`
  display: inline-block;
  width: 5px;
  height: 7px;
  margin-right: 2px;
  border: 1px solid #3b4144;
  vertical-align: 4px;
`;

const InsertLine = styled.div`
  height: 7px;
  margin: 3px 5px 0 11px;
  border: solid #5fbf3f;
  border-width: 0 2px;
  background: linear-gradient(#5fbf3f, #5fbf3f) center / 100% 1px no-repeat;
`;

const Graphics = styled.section`
  display: grid;
  grid-template: minmax(0, 1fr) / minmax(0, 1fr);
  background: #303635;
`;

const Scene = styled.svg`
  grid-area: 1 / 1;
  width: 100%;
  height: 100%;
`;

const ViewToolbar = styled.div`
  grid-area: 1 / 1;
  z-index: 1;
  place-self: start center;
  display: flex;
  align-items: center;
  gap: 2px;
  height: 31px;
  margin-top: 7px;
  padding: 0 4px 0 3px;
  background: #ecf0f1;
  border: 1px solid #b9c0c1;
`;

const MoreCorner = styled.i`
  align-self: flex-end;
  width: 0;
  height: 0;
  margin: 0 -2px 2px -1px;
  border: solid transparent;
  border-width: 3px 0 0 3px;
  border-bottom: 0;
  border-right: 3px solid #4c5253;
`;

/* ---------- status bar and taskbar ---------- */

const StatusBar = styled.footer`
  flex: none;
  height: 38px;
  display: flex;
  align-items: center;
  padding: 0 18px 0 5px;
  background: #ecf0f1;
  border-top: 1px solid #7f8788;
  border-bottom: 2px solid #f8fbfb;
`;

const StatusMessage = styled.p`
  display: flex;
  align-items: center;
  align-self: flex-start;
  gap: 2px;
  margin: 7px auto 0 3px;
  font-size: 11px;
  line-height: 18px;
`;

const BoxButton = styled.button`
  display: flex;
  align-items: center;
  justify-content: center;
  gap: 7px;
  width: ${(p) => p.$w}px;
  height: ${(p) => p.$h}px;
  border: 1px solid #a4abac;
  background: #f1f4f5;
  color: #5a6061;
`;

const SelectBox = styled.div`
  display: flex;
  align-items: center;
  width: 177px;
  height: 25px;
  margin-left: 98px;
  padding-right: 2px;
  border: 1px solid #b9bfc0;
  background: #f8f9f9;
  color: #5a6061;
`;

const FilterSelect = styled.select`
  appearance: none;
  flex: 1;
  height: 23px;
  padding: 0 7px;
  border: 0;
  background: none;
  font-size: 12px;
  color: #33393b;
`;

const Watermark = styled.div`
  position: absolute;
  right: 14px;
  bottom: 7px;
  width: 166px;
  pointer-events: none;
  font-style: italic;
`;

const WatermarkName = styled.div`
  display: flex;
  justify-content: space-between;
  font-size: 39px;
  line-height: 40px;
  font-weight: 400;
  color: #000;
`;

const WatermarkFire = styled.span`
  color: #ff6633;
`;

const WatermarkFlame = styled.svg`
  position: absolute;
  left: 67px;
  top: -18px;
`;

const WatermarkUrl = styled.div`
  font-family: "Liberation Sans", sans-serif;
  font-size: 18px;
  line-height: 20px;
  text-align: center;
  color: #999;
`;

const TaskBar = styled.div`
  flex: none;
  height: 8px;
  background: linear-gradient(
    to right,
    #0b2b47 580px, #826149 580px, #826149 680px, #06294e 680px,
    #0b2f52 1084px, #02529b 1084px, #02529b 1184px, #0b2f52 1184px
  );
`;

const tabs = [
  { label: "文件", w: 66, file: true },
  { label: "模型" },
  { label: "分析" },
  { label: "注释" },
  { label: "人体模型", w: 99 },
  { label: "工具", active: true },
  { label: "视图" },
  { label: "应用程序", w: 99 },
  { label: "EMX 装配", w: 104 },
  { label: "EMX 元件", w: 105 },
  { label: "SHC", w: 74 },
  { label: "框架" },
];

const ribbon = [
  {
    label: "调查", w: 374, more: true,
    parts: [
      { big: "物料清单", icon: "bom" },
      { big: "模型播放器", icon: "player" },
      { rows: [["compInfo", "元件"], ["modelInfo", "模型信息"], ["featInfo", "特征信息"]] },
      { rule: true },
      { big: "参考查看器", icon: "refViewer" },
      { big: "查找", icon: "binoculars", w: 40 },
      { rows: [["geomCheck", "几何检查", "off"], ["msgLog", "消息日志"], ["compareAsm", "比较装配"]] },
    ],
  },
  {
    label: "模型意图", w: 235, more: true,
    parts: [
      { big: "元件界面", icon: "compInterface" },
      { big: "发布几何", icon: "pubGeom" },
      { big: "族表", icon: "familyTable", w: 40 },
      { rows: [["params", "参数"], ["switchDim", "切换尺寸"], ["relations", "关系"]] },
    ],
  },
  {
    label: "传感器", w: 231, more: true,
    parts: [
      { big: "插入传感器", icon: "insertSensor", w: 68, drop: true },
      { big: "传感器信息和设置", icon: "sensorInfo" },
      { rows: [["server", "连接到服务器", "off"], ["loadData", "加载数据", "drop"], ["viewData", "查看数据", "off"]] },
    ],
  },
  {
    label: "实用工具", w: 207,
    parts: [
      { rows: [["udf", "UDF 库"], ["appearance", "外观管理器"], ["auxApps", "辅助应用程序"]], w: 100 },
      { rows: [["imageEditor", "图像编辑器"], ["xsection", "剖面线设计器"]] },
    ],
  },
  {
    label: "增强现实", w: 123,
    parts: [
      { big: "目标", icon: "target", w: 40, drop: true },
      { rows: [["cloudUp", "发布模型"], ["share", "管理模型"]] },
    ],
  },
  {
    label: "Intelligent Fastener", w: 167, more: true,
    parts: [
      { big: "螺钉", icon: "screw", w: 40, drop: true },
      { big: "定位销", icon: "pin", w: 44, drop: true },
      { rows: [["reassemble", "重新组装"], ["redefine", "重定义"], ["remove", "删除"]] },
    ],
  },
];

const RibbonPart = ({ part }) => {
  if (part.rule) return <InnerRule />;
  if (part.big) {
    return (
      <BigButton $w={part.w}>
        <Icon name={part.icon} size={32} />
        <span>{part.big}</span>
        {part.drop && <Icon name="caret" size={12} />}
      </BigButton>
    );
  }
  return (
    <SmallColumn $w={part.w}>
      {part.rows.map(([icon, label, state]) => (
        <SmallButton key={label} disabled={state === "off"}>
          <Icon name={icon} />
          <span>{label}</span>
          {state === "drop" && <Icon name="caret" size={12} />}
        </SmallButton>
      ))}
    </SmallColumn>
  );
};

const Ribbon = () => (
  <RibbonBar>
    {ribbon.map((group) => (
      <Group key={group.label} $w={group.w}>
        <GroupBody>
          {group.parts.map((part, index) => (
            <RibbonPart key={index} part={part} />
          ))}
        </GroupBody>
        <GroupLabel>
          {group.label}
          {group.more && <Icon name="caret" size={12} />}
        </GroupLabel>
      </Group>
    ))}
  </RibbonBar>
);

const quickAccess = [
  ["newFile", "新建", 24, 18],
  ["open", "打开", 24, 18],
  ["save", "保存", 24, 18],
  ["undo", "撤消", 22, 16],
  ["caret", "撤消列表", 16, 12],
  ["redo", "重做", 22, 16],
  ["caret", "重做列表", 16, 12],
  ["regen", "重新生成", 24, 18],
  ["windows", "窗口", 24, 18],
  ["caretOpen", "窗口列表", 14, 14],
  ["closeBox", "关闭窗口", 24, 16],
];

const Header = () => (
  <TitleBar>
    <QuickAccess>
      <Brand>
        <Icon name="logo" />
        <span>creo<BrandDot>•</BrandDot></span>
      </Brand>
      {quickAccess.map(([icon, label, w, size]) => (
        <ToolButton key={label} $w={w} $color="#b9bfc0" aria-label={label}>
          <Icon name={icon} size={size} />
        </ToolButton>
      ))}
      <Rule />
      <ToolButton $w={22} aria-label="自定义快速访问工具栏">
        <Icon name="caretBar" size={14} />
      </ToolButton>
    </QuickAccess>
    <WindowTitle>ASM0001 (活动的) - Creo Parametric</WindowTitle>
    <WindowButtons>
      <ToolButton aria-label="最小化"><Icon name="minimize" size={14} /></ToolButton>
      <ToolButton aria-label="还原"><Icon name="restore" size={14} /></ToolButton>
      <ToolButton aria-label="关闭"><Icon name="close" size={12} /></ToolButton>
    </WindowButtons>
  </TitleBar>
);

const treeItems = [
  { icon: "assembly", label: "ASM0001.ASM" },
  { icon: "datumPlane", label: "ASM_RIGHT", child: true },
  { icon: "datumPlane", label: "ASM_TOP", child: true },
  { icon: "datumPlane", label: "ASM_FRONT", child: true },
  { icon: "csys", label: "ASM_DEF_CSYS", child: true },
  { icon: "part", label: "PRT0001.PRT", expand: true },
];

const ModelTree = () => (
  <Navigator>
    <NavTabs>
      <NavTab $active aria-label="模型树"><Icon name="treeTab" /></NavTab>
      <NavTab aria-label="文件夹浏览器"><Icon name="folders" /></NavTab>
      <NavTab aria-label="收藏夹"><Icon name="favorites" /></NavTab>
    </NavTabs>
    <NavToolbar>
      <ToolButton aria-label="模型"><Icon name="greenCube" size={14} /></ToolButton>
      <ToolButton $w={6} aria-label="工具栏手柄"><Icon name="handle" /></ToolButton>
      <Spacer $w={13} />
      <ToolButton aria-label="全部展开"><Icon name="expandList" /></ToolButton>
      <ToolButton $w={22} aria-label="全部折叠"><Icon name="collapseList" /></ToolButton>
      <Spacer $w={1} />
      <ToolButton $pressed aria-label="树列"><Icon name="columns" /></ToolButton>
      <Rule $gap={4} />
      <ToolButton aria-label="树过滤器"><Icon name="treeFilter" /></ToolButton>
      <ToolButton aria-label="列设置"><Icon name="treeColumns" /></ToolButton>
      <Rule $gap={4} />
      <ToolButton aria-label="设置"><Icon name="gears" /></ToolButton>
      <ToolButton aria-label="层"><Icon name="layers" /></ToolButton>
      <ToolButton aria-label="选择"><Icon name="treeArrow" /></ToolButton>
      <Spacer $w={4} />
      <ToolButton aria-label="详细信息"><Icon name="listDoc" /></ToolButton>
    </NavToolbar>
    <FilterRow>
      <Icon name="funnel" />
      <FilterField>
        <FilterInput aria-label="搜索模型树" />
        <ToolButton $w={18} aria-label="清除"><Icon name="clear" size={14} /></ToolButton>
      </FilterField>
      <ToolButton $w={12} aria-label="搜索历史"><Icon name="caret" size={12} /></ToolButton>
      <ToolButton $w={20} aria-label="添加"><Icon name="plus" size={14} /></ToolButton>
    </FilterRow>
    <Tree>
      {treeItems.map((item) => (
        <TreeRow key={item.label} $child={item.child} $expand={item.expand}>
          {item.expand && <ToolButton $w={20} aria-label="展开"><Icon name="expander" size={11} /></ToolButton>}
          <TreeItem>
            <Icon name={item.icon} />
            <span>{item.expand && <PlacementMark />}{item.label}</span>
          </TreeItem>
        </TreeRow>
      ))}
    </Tree>
    <InsertLine />
  </Navigator>
);

const viewTools = [
  ["refit", "重新调整"], ["zoomIn", "放大"], ["zoomOut", "缩小"], ["repaint", "重画"],
  ["shading", "渲染选项", "more"], ["displayStyle", "显示样式", "more"], ["savedViews", "已保存方向", "more"],
  ["viewManager", "视图管理器"], ["perspective", "透视图"], ["section", "截面", "more"],
  ["datumDisplay", "基准显示过滤器", "more"], ["annotation", "注释显示", "on"], ["spinCenter", "旋转中心", "on"],
  ["simulate", "仿真"], ["pause", "暂停"], ["exitSim", "退出仿真"],
];

const Model = () => (
  <Scene viewBox="295 170 1305 662" role="img" aria-label="PRT0001">
    <g shapeRendering="crispEdges">
      <path d="M737 246H1179L1021 424H581z" fill="#98a4b3" />
      <path d="M581 424H1021L1084 804H643z" fill="#939fae" />
      <path d="M1179 245L1022 424L1084 805L1243 627z" fill="#5a5c66" />
    </g>
    <path d="M1179 247L1021 424L1084 804" fill="none" stroke="#a3aab8" strokeWidth="1.500" />
    <g fill="none" stroke="#764755" strokeWidth="1" shapeRendering="crispEdges">
      <path d="M732 242.500H828M828 243.500H1182M732 242L762 421L795 628L825 807" />
      <path d="M805 245H1179" stroke="#3e2f36" strokeWidth="2" />
      <path d="M763 425L796 626" />
      <path d="M919 242L762 421M920 242L982 628M982 629L826 807" />
      <path d="M763 433L607 610M607 610.500H1054M763 429.500H1021" />
      <path d="M1021 430.500H1213M1054 625.500H1244M1054 628.500H1244" strokeOpacity="0.8" />
      <path d="M795 624.500H1054M795 628.500H1054M795 629L639 805" />
      <path d="M639 804.500H1085" stroke="#5d3b45" strokeWidth="2" />
      <path d="M1178 243L1020 423L1084 808M1085 808L1245 628" />
      <path d="M1180 243L1242 629M1182 244L1244 629" />
      <path d="M1087 803L1243 629" strokeOpacity="0.6" />
      <path d="M1212 448L1055 606" strokeOpacity="0.3" />
    </g>
    <g fill="none" strokeWidth="1.400">
      <path d="M910 525L908 508" stroke="#e8304c" />
      <path d="M910 525H929" stroke="#43e3ee" />
      <path d="M910 526L904 533" stroke="#61c460" />
    </g>
    <circle cx="908" cy="507" r="2" fill="#f02846" />
    <circle cx="929" cy="525" r="2.500" fill="#43e3ee" />
    <circle cx="904" cy="533" r="3" fill="#3be33b" />
  </Scene>
);

const StatusRow = () => (
  <StatusBar>
    <ToolButton $pressed aria-label="导航器"><Icon name="navToggle" /></ToolButton>
    <Spacer $w={1} />
    <ToolButton $w={26} aria-label="浏览器"><Icon name="globe" size={18} /></ToolButton>
    <ToolButton $w={26} aria-label="全屏"><Icon name="blankSquare" /></ToolButton>
    <Spacer $w={7} />
    <Rule />
    <StatusMessage>
      <Icon name="message" size={12} />
      操作已被用户取消。
    </StatusMessage>
    <Rule $gap={2} />
    <Rule $gap={2} />
    <BoxButton $w={42} $h={25} aria-label="查找">
      <Icon name="binoculars" size={18} />
      <Icon name="caret" size={10} />
    </BoxButton>
    <Rule $gap={2} />
    <BoxButton $w={40} $h={28} aria-label="选择缓冲区">
      <Icon name="modelBox" size={18} />
    </BoxButton>
    <SelectBox>
      <FilterSelect aria-label="选择过滤器">
        <option>几何</option>
      </FilterSelect>
      <Icon name="caret" size={12} />
    </SelectBox>
  </StatusBar>
);

const App = () => {
  return (
    <Desktop>
      <GlobalStyle />
      <Shell>
        <Header />
        <TabBar>
          {tabs.map((tab) => (
            <Tab key={tab.label} $w={tab.w} $active={tab.active} $file={tab.file}>
              {tab.label}
            </Tab>
          ))}
          <TabTools>
            <ToolButton aria-label="最小化功能区"><Icon name="collapse" size={14} /></ToolButton>
            <CommandSearch aria-label="命令搜索" />
            <SearchButton aria-label="搜索"><Icon name="searchDisc" size={18} /></SearchButton>
            <HelpButton>?</HelpButton>
          </TabTools>
        </TabBar>
        <Ribbon />
        <Workspace>
          <ModelTree />
          <Graphics>
            <Model />
            <ViewToolbar>
              {viewTools.map(([icon, label, state]) => (
                <ToolButton key={label} $pressed={state === "on"} aria-label={label}>
                  <Icon name={icon} />
                  {state === "more" && <MoreCorner />}
                </ToolButton>
              ))}
            </ViewToolbar>
          </Graphics>
        </Workspace>
        <StatusRow />
        <TaskBar />
        <Watermark>
          <WatermarkFlame width="20" height="43" viewBox="0 0 20 43" aria-hidden="true">
            <path d="M4 0C14 7 21 18 16 29C13 36 8 40 2 42L0 38C7 32 9 22 2 9C7 12 9 16 11 21C13 14 9 6 4 0z" fill="#ff6633" />
          </WatermarkFlame>
          <WatermarkName>
            <WatermarkFire>野火</WatermarkFire>
            <span>论坛</span>
          </WatermarkName>
          <WatermarkUrl>www.proewildfire.cn</WatermarkUrl>
        </Watermark>
      </Shell>
    </Desktop>
  );
};

export default App;
